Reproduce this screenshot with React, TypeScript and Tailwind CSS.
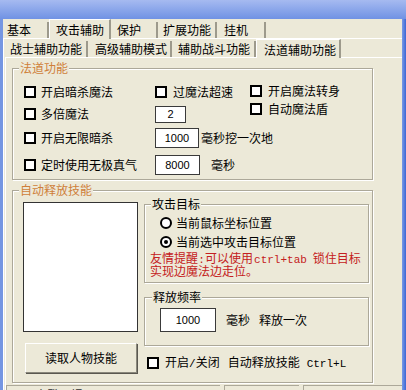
const cjk = "font-['Noto_Sans_CJK_SC','Liberation_Sans',sans-serif]";
const mono = "font-['Liberation_Mono','Noto_Sans_CJK_SC',monospace]";
const num = "font-['Liberation_Sans',sans-serif] text-[11px]";

const outerTabs = [
  { label: '基本', w: 'w-[46px]', pl: 'pl-[4px]' },
  { label: '攻击辅助', w: 'w-[62px]', pl: 'pl-[6px]', active: true },
  { label: '保护', w: 'w-[47px]', pl: 'pl-[6px]' },
  { label: '扩展功能', w: 'w-[59px]', pl: 'pl-[5px]' },
  { label: '挂机', w: 'w-[49px]', pl: 'pl-[7px]' },
];

const innerTabs = [
  { label: '战士辅助功能', w: 'w-[83px]', pl: 'pl-[5px]' },
  { label: '高级辅助模式', w: 'w-[84px]', pl: 'pl-[7px]' },
  { label: '辅助战斗功能', w: 'w-[84px]', pl: 'pl-[6px]' },
  { label: '法道辅助功能', w: 'w-[85px]', pl: 'pl-[7px]', active: true },
];

function Tab({ label, w, pl, active, tall }: { label: string; w: string; pl: string; active?: boolean; tall: string }) {
  return (
    <div
      className={`${w} ${pl} flex items-center shrink-0 bg-[#ece9d8] border-r-2 border-r-[#9d9a8c] ${
        active ? `${tall} -mb-px relative border-l border-t border-white pt-[1px]` : 'h-[16px]'
      }`}
    >
      {label}
    </div>
  );
}

function Check({ label, gap = 'gap-[5px]' }: { label: string; gap?: string }) {
  return (
    <div className={`flex items-center whitespace-nowrap ${gap}`}>
      <span className="w-[12px] h-[12px] border-2 border-black bg-white shrink-0" />
      <span>{label}</span>
    </div>
  );
}

function Radio({ label, checked }: { label: string; checked?: boolean }) {
  return (
    <div className="flex items-center gap-[4px] h-[19px]">
      <span className="w-[12px] h-[12px] rounded-full border-2 border-black bg-white flex items-center justify-center shrink-0">
        {checked && <span className="w-[4px] h-[4px] rounded-full bg-black" />}
      </span>
      <span>{label}</span>
    </div>
  );
}

function Field({ value, className }: { value: string; className: string }) {
  return (
    <div className={`${className} ${num} bg-white border border-[#3a3a3a] flex items-center justify-center shrink-0`}>
      {value}
    </div>
  );
}

function Group({
  title,
  titleClass = 'text-black',
  titleLeft = 'left-[6px]',
  className,
  children,
}: {
  title: string;
  titleClass?: string;
  titleLeft?: string;
  className: string;
  children?: React.ReactNode;
}) {
  return (
    <div className={`relative border border-[#aca899] shadow-[inset_1px_1px_0_#fff,1px_1px_0_#fff] ${className}`}>
      <span className={`absolute -top-[8px] ${titleLeft} px-[1px] bg-[#ece9d8] leading-[14px] ${titleClass}`}>{title}</span>
      {children}
    </div>
  );
}

export default function App() {
  return (
    <div className={`w-[406px] h-[390px] overflow-hidden flex flex-col bg-[#ece9d8] text-black text-[12px] leading-[14px] ${cjk}`}>
      <div className="h-[19px] shrink-0 bg-gradient-to-b from-[#a6baf0] to-[#7092e4]" />
      <div className="flex flex-1 min-h-0">
        <div className="w-[3px] shrink-0 bg-[#7596e2]" />
        <div className="flex-1 min-w-0 flex flex-col">
          {/* outer tabs */}
          <div className="h-[20px] shrink-0 flex items-end border-b border-white">
            {outerTabs.map((t) => (
              <Tab key={t.label} {...t} tall="h-[20px]" />
            ))}
          </div>
          {/* outer page */}
          <div className="flex-1 min-h-0 flex flex-col border-l border-white pl-[1px]">
            <div className="h-[19px] shrink-0 flex items-end border-b border-white">
              {innerTabs.map((t) => (
                <Tab key={t.label} {...t} tall="h-[19px]" />
              ))}
            </div>
            {/* inner page */}
            <div className="flex-1 min-h-0 border-l border-white pl-[6px] flex flex-col">
              <Group title="法道功能" titleClass="text-[#cf7f3a]" className="mt-[10px] w-[361px] h-[112px] shrink-0">
                <div className="flex pl-[11px] pt-[13px]">
                  <div className="flex flex-col w-[226px] shrink-0">
                    <div className="flex items-center h-[19px]">
                      <div className="w-[131px] shrink-0">
                        <Check label="开启暗杀魔法" />
                      </div>
                      <Check label="过魔法超速" gap="gap-[6px]" />
                    </div>
                    <div className="flex items-center h-[20px] mt-[3px]">
                      <div className="w-[131px] shrink-0">
                        <Check label="多倍魔法" />
                      </div>
                      <Field value="2" className="w-[31px] h-[17px]" />
                    </div>
                    <div className="flex items-center h-[20px] mt-[4px] whitespace-nowrap">
                      <div className="w-[131px] shrink-0">
                        <Check label="开启无限暗杀" />
                      </div>
                      <Field value="1000" className="w-[44px] h-[20px]" />
                      <span className="ml-[2px]">毫秒挖一次地</span>
                    </div>
                    <div className="flex items-center h-[20px] mt-[7px] whitespace-nowrap">
                      <div className="w-[131px] shrink-0">
                        <Check label="定时使用无极真气" />
                      </div>
                      <Field value="8000" className="w-[45px] h-[20px]" />
                      <span className="ml-[11px]">毫秒</span>
                    </div>
                  </div>
                  <div className="flex flex-col">
                    <div className="h-[18px] flex items-center">
                      <Check label="开启魔法转身" gap="gap-[6px]" />
                    </div>
                    <div className="h-[17px] flex items-center">
                      <Check label="自动魔法盾" gap="gap-[6px]" />
                    </div>
                  </div>
                </div>
              </Group>

              <Group title="自动释放技能" titleClass="text-[#cf7f3a]" className="mt-[10px] w-[361px] h-[193px] shrink-0">
                <div className="flex pl-[10px]">
                  <div className="flex flex-col pt-[11px]">
                    <div className="w-[115px] h-[130px] bg-white border border-[#333]" />
                    <button className="mt-[11px] ml-[2px] w-[112px] h-[30px] flex items-center justify-center bg-[#ece9d8] border border-t-white border-l-white border-r-[#8a887c] border-b-[#8a887c] shadow-[1px_1px_0_#5a5850]">
                      读取人物技能
                    </button>
                  </div>
                  <div className="flex flex-col pt-[13px] ml-[6px]">
                    <Group title="攻击目标" className="w-[225px] h-[79px] shrink-0">
                      <div className="pl-[15px] pt-[8px]">
                        <Radio label="当前鼠标坐标位置" />
                        <Radio label="当前选中攻击目标位置" checked />
                      </div>
                      <div className="pl-[5px] text-[#c42020] leading-[13px]">
                        <div className="flex items-baseline h-[13px]">
                          <span>友情提醒</span>
                          <span className={`${mono} text-[11px] w-[7px] text-center`}>:</span>
                          <span>可以使用</span>
                          <span className={`${mono} text-[11px] ml-[1px]`}>ctrl+tab</span>
                          <span className="ml-[6px]">锁住目标</span>
                        </div>
                        <div className="h-[13px]">实现边魔法边走位。</div>
                      </div>
                    </Group>
                    <Group title="释放频率" titleLeft="left-[7px]" className="mt-[14px] w-[225px] h-[49px] shrink-0">
                      <div className="flex items-center pl-[15px] pt-[10px]">
                        <Field value="1000" className="w-[56px] h-[24px]" />
                        <span className="ml-[10px]">毫秒</span>
                        <span className="ml-[9px]">释放一次</span>
                      </div>
                    </Group>
                    <div className="mt-[7px] h-[20px] flex items-center pl-[3px] whitespace-nowrap">
                      <span className="w-[12px] h-[12px] border-2 border-black bg-white shrink-0" />
                      <div className="flex items-baseline">
                        <span className="ml-[6px]">开启</span>
                        <span className={`${mono} text-[11px]`}>/</span>
                        <span>关闭</span>
                        <span className="ml-[8px]">自动释放技能</span>
                        <span className={`${mono} text-[11px] ml-[7px]`}>Ctrl+L</span>
                      </div>
                    </div>
                  </div>
                </div>
              </Group>

              <div className="mt-[2px] flex gap-[4px] -ml-[6px] h-[10px] shrink-0">
                <div className="w-[214px] border-t border-l border-[#aca899] pl-[28px] pt-[2px] text-[#333]">未登录提示</div>
                <div className="w-[75px] border-t border-l border-[#aca899]" />
                <div className="flex-1 border-t border-l border-[#aca899]" />
              </div>
            </div>
          </div>
        </div>
        <div className="w-[4px] shrink-0 bg-gradient-to-r from-[#7a9ae6] to-[#3c66d4]" />
      </div>
    </div>
  );
}
